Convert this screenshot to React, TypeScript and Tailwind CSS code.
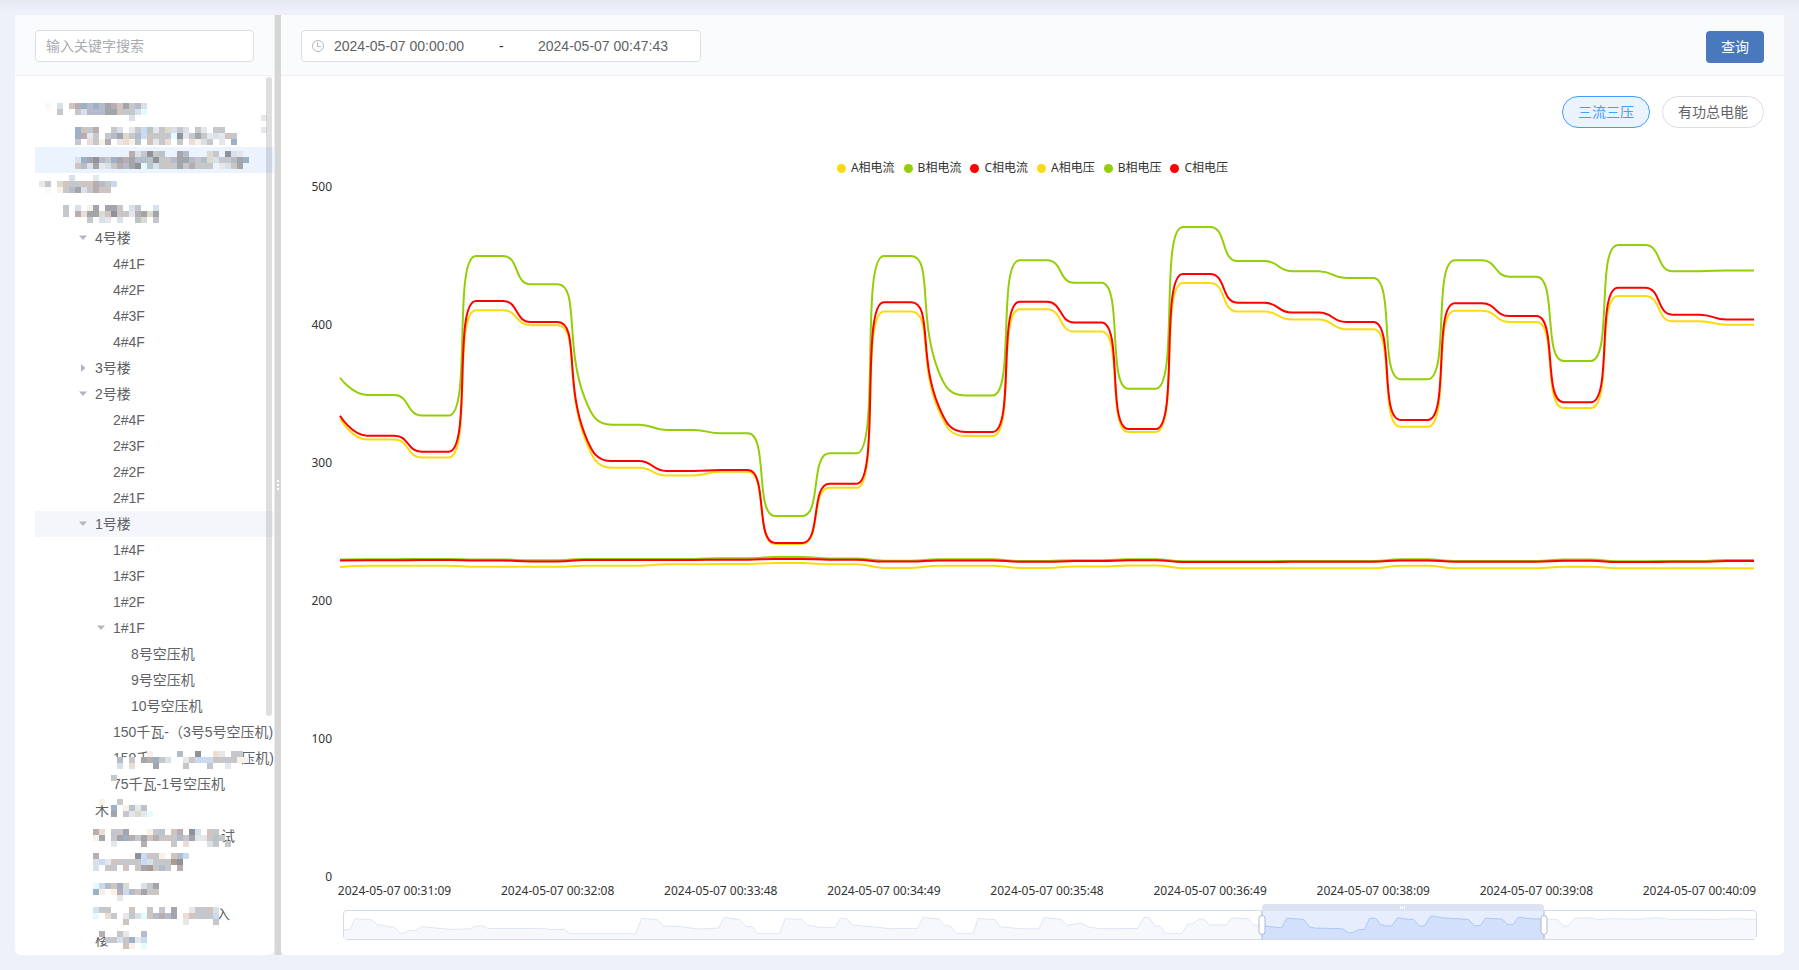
import { useState } from 'react';
import clsx from 'clsx';

type TreeRow = {
  level: number;
  label?: string;
  arrow?: 'down' | 'right';
  state?: 'current' | 'hover';
  // Redacted names: a cell pattern, its top inside the row, and what stays readable after it
  mask?: string[];
  maskTop?: number;
  tail?: string;
  tailClass?: string;
};

const maskColors: Record<string, string> = {
  a: '#e6e7ea',
  b: '#c6c7ca',
  c: '#a4a5ab',
  d: '#8f9298',
  e: '#d8e0ea',
  f: '#9db0c6',
  g: '#b5bbcb',
  h: '#cfc4bf',
  i: '#b8adb1',
  j: '#ecdcd4',
  k: '#dadbcc',
  l: '#c9dbf2',
  m: '#e2fbff',
  n: '#f8f1e8',
  o: '#b7c5c8',
  p: '#a89b90',
  q: '#f7f8f9',
  w: '#ffffff',
};

const rows: TreeRow[] = [
  {
    level: 0,
    maskTop: 8,
    mask: [
      '.q.e.hifgfgcihcbge',
      '...b..begggcchbbem',
      '...............e.....................a',
    ],
  },
  {
    level: 1,
    maskTop: 6,
    mask: [
      '......fhbi..be.abloabkebe.ba.bb......a',
      '......fiab.bgckbglhbbbmdabcbaeahb',
      '......b.jbni.ajno.habj.b.jneb.a.f',
    ],
  },
  {
    level: 1,
    state: 'current',
    maskTop: 4,
    mask: [
      '...............iebdbo..cg...kb.dea',
      '......efcdgbfcicggodbbgccgbgkebbgcf',
      '......hgecaebigcdmoebhbcbibbb.aehc',
    ],
  },
  {
    level: 0,
    maskTop: 2,
    mask: ['.....e...a', 'ab.khbbhhigbl', '.q.nbgcebihh'],
  },
  {
    level: 1,
    maskTop: 6,
    mask: [
      '....b.e.nc.ccb.eb..e',
      '....b.ijcckhdhbaickc',
      '........b.ea.e..ok.b',
    ],
  },
  { level: 2, label: '4号楼', arrow: 'down' },
  { level: 3, label: '4#1F' },
  { level: 3, label: '4#2F' },
  { level: 3, label: '4#3F' },
  { level: 3, label: '4#4F' },
  { level: 2, label: '3号楼', arrow: 'right' },
  { level: 2, label: '2号楼', arrow: 'down' },
  { level: 3, label: '2#4F' },
  { level: 3, label: '2#3F' },
  { level: 3, label: '2#2F' },
  { level: 3, label: '2#1F' },
  { level: 2, label: '1号楼', arrow: 'down', state: 'hover' },
  { level: 3, label: '1#4F' },
  { level: 3, label: '1#3F' },
  { level: 3, label: '1#2F' },
  { level: 3, label: '1#1F', arrow: 'down' },
  { level: 4, label: '8号空压机' },
  { level: 4, label: '9号空压机' },
  { level: 4, label: '10号空压机' },
  { level: 3, label: '150千瓦-（3号5号空压机)' },
  {
    level: 3,
    label: '150千',
    tail: '压机)',
    tailClass: 'ml-auto',
    maskTop: 6,
    mask: [
      '..................n....g..d..ja.bb',
      '............wgwbwcifbe..ahlllhbbbnn',
      '............wewjwwwc....b...b..a',
    ],
  },
  {
    level: 3,
    label: '75千瓦-1号空压机',
    maskTop: 4,
    mask: ['............b'],
  },
  {
    level: 2,
    label: '木',
    maskTop: 2,
    mask: ['..........n..b', '............f.noao', '............c.bakam'],
  },
  {
    level: 2,
    tail: '试',
    tailClass: 'ml-[126px]',
    maskTop: 6,
    mask: [
      '.........ij.bbc...nbo.hi.de.hb',
      '.........nc.bcfibchibhbgbcaahob',
      '............a....i....b.j...eb.b',
    ],
  },
  {
    level: 2,
    maskTop: 4,
    mask: [
      '.........i......dlhbn.hgl',
      '.........elahbbbblebbbpd',
      '.........e.bb.h.hcpbgb.i',
    ],
  },
  {
    level: 2,
    maskTop: 8,
    mask: ['.........mlghfk..ebc', '.........fn.nilghcbh', '.............a'],
  },
  {
    level: 2,
    tail: '入',
    tailClass: 'ml-[121px]',
    maskTop: 6,
    mask: [
      '.........ebb...h..b.b.c..abbhe',
      '.........m.jb.abemhgigc.jhbbbl',
      '..............h.........a....b',
    ],
  },
  {
    level: 2,
    label: '楼',
    maskTop: 4,
    mask: ['.........wiwwba..g', '...........bbebfal', '..............hn.m'],
  },
];

const indents = ['pl-0', 'pl-[18px]', 'pl-9', 'pl-[54px]', 'pl-[72px]'];

const Mask = ({ cells, top }: { cells: string[]; top: number }) => (
  <svg
    className="pointer-events-none absolute left-0 top-0 overflow-visible"
    width={239}
    height={26}
    shapeRendering="crispEdges"
    aria-hidden="true"
  >
    {cells.map((line, y) =>
      line
        .split('')
        .map((cell, x) =>
          cell === '.' ? null : (
            <rect
              key={`${x}-${y}`}
              x={4 + x * 6}
              y={top + y * 6}
              width={6}
              height={6}
              fill={maskColors[cell]}
            />
          )
        )
    )}
  </svg>
);

const TreeItem = ({ row }: { row: TreeRow }) => (
  <li
    className={clsx(
      'relative',
      row.state === 'current' && 'bg-[#ebf3ff]',
      row.state === 'hover' && 'bg-[#f5f6fb]'
    )}
  >
    <button
      type="button"
      aria-label={row.label ?? row.tail ?? '***'}
      className={clsx(
        'flex h-[26px] w-full items-center whitespace-nowrap text-left text-sm',
        indents[row.level]
      )}
    >
      <span className="flex w-6 shrink-0 justify-center">
        {row.arrow && (
          <svg width={8} height={8} viewBox="0 0 8 8" fill="#b4b6bd">
            <path d={row.arrow === 'down' ? 'M0 1.5h8L4 6z' : 'M2 0v8l4.5-4z'} />
          </svg>
        )}
      </span>
      {row.label && <span>{row.label}</span>}
      {row.tail && <span className={row.tailClass}>{row.tail}</span>}
    </button>
    {row.mask && <Mask cells={row.mask} top={row.maskTop ?? 0} />}
  </li>
);

const Sidebar = () => (
  <aside className="relative flex w-[259px] shrink-0 flex-col overflow-hidden rounded-b-md bg-white">
    <div className="h-[61px] shrink-0 border-b border-[#eef0f5] bg-[#fafbfd] pl-5 pr-5 pt-[15px]">
      <input
        type="text"
        aria-label="输入关键字搜索"
        placeholder="输入关键字搜索"
        className="h-8 w-full rounded border border-[#dcdfe6] bg-white px-2.5 text-sm outline-none placeholder:text-[#a8abb2]"
      />
    </div>
    <ul className="min-h-0 flex-1 overflow-hidden pl-5 pt-[19px]">
      {rows.map((row, i) => (
        <TreeItem key={i} row={row} />
      ))}
    </ul>
    <div className="absolute right-[2px] top-[62px] h-[68%] w-1.5 rounded-full bg-[#909399]/30" />
  </aside>
);

const YELLOW = '#fbdb0f';
const GREEN = '#93ce07';
const RED = '#ff0000';

const WIDTH = 1414;
const HEIGHT = 690;
const MAX = 500;

// Every reading lasts two samples unless it is listed with its own count
const expand = (values: (number | [number, number])[]) =>
  values.flatMap((v) =>
    Array.isArray(v) ? Array(v[1]).fill(v[0]) : [v, v]
  ) as number[];

const series = [
  {
    name: 'A相电流',
    color: YELLOW,
    data: expand([
      [332.3, 1], 317, 304, 410.6, 399.8, [318, 1], 296.6, 291, 293.7, 241.3,
      282, 409.8, [339, 1], 319.5, 411.4, 395.2, 322.5, 430.4, 409.7, 404,
      396.9, 326.3, 410.4, 402.2, 339.9, 421, 402.7, 400.2,
    ]),
  },
  {
    name: 'B相电流',
    color: GREEN,
    data: expand([
      [361.8, 1], 349.3, 334.4, 450, 429.5, [347, 1], 327.8, 324, 321.5, 261.6,
      307, 450, [367, 1], 349, 447, 430.6, 353.8, 471, 446.4, 439, 434, 360.7,
      446.9, 435, 374, 458, 439, 439.5,
    ]),
  },
  {
    name: 'C相电流',
    color: RED,
    data: expand([
      [334.3, 1], 319.8, 308.2, 417.4, 402.2, [321, 1], 301.4, 294.2, 294.9,
      242, 285, 416.4, [342, 1], 322.5, 416.8, 401.9, 324.6, 437, 416.2, 409,
      402.2, 331.2, 415.7, 406.5, 344, 427, 407.5, 403.9,
    ]),
  },
  {
    name: 'A相电压',
    color: YELLOW,
    data: expand([
      [224.6, 1], 225.6, 225.6, 224.8, 224.8, [225.6, 1], 225.6, 226.6, 226.8,
      227.5, 226.6, 224, [225.6, 1], 225.6, 224, 225, 225.8, 223.8, 223.8,
      223.8, 223.8, 225.6, 223.8, 223.8, 224.8, 223.8, 223.8, 223.8,
    ]),
  },
  {
    name: 'B相电压',
    color: GREEN,
    data: expand([
      [230, 1], 230.3, 230.5, 230.1, 229.5, [230.5, 1], 230.5, 230.5, 231,
      231.8, 230.8, 229.2, [230.2, 1], 230.2, 229, 229.6, 230.3, 228.8, 228.8,
      229, 229, 230.2, 229, 229, 230, 228.8, 229, 229.8,
    ]),
  },
  {
    name: 'C相电压',
    color: RED,
    data: expand([
      [229.3, 1], 229.5, 229.7, 229.3, 228.7, [229.8, 1], 229.8, 229.8, 229.9,
      230.5, 229.9, 228.6, [229.4, 1], 229.4, 228.4, 229, 229.5, 228.3, 228.3,
      228.4, 228.4, 229.4, 228.4, 228.4, 229.1, 228.3, 228.4, 229,
    ]),
  },
];

const clamp = (v: number, a: number, b: number) =>
  Math.min(Math.max(v, Math.min(a, b)), Math.max(a, b));

const smoothPath = (data: number[]) => {
  const pts = data.map((v, i) => ({
    x: (i * WIDTH) / (data.length - 1),
    y: HEIGHT - (v / MAX) * HEIGHT,
  }));
  let d = `M${pts[0].x} ${pts[0].y}`;
  let c0 = pts[0];

  for (let i = 1; i < pts.length; i++) {
    const prev = pts[i - 1];
    const cur = pts[i];
    const next = pts[i + 1];
    let c1 = cur;
    let nextC0 = cur;

    if (next) {
      const before = Math.hypot(cur.x - prev.x, cur.y - prev.y);
      const after = Math.hypot(next.x - cur.x, next.y - cur.y);
      const k = (0.5 * after) / (after + before);
      const nx = clamp(cur.x + (next.x - prev.x) * k, cur.x, next.x);
      const ny = clamp(cur.y + (next.y - prev.y) * k, cur.y, next.y);
      c1 = {
        x: clamp(cur.x - ((nx - cur.x) * before) / after, prev.x, cur.x),
        y: clamp(cur.y - ((ny - cur.y) * before) / after, prev.y, cur.y),
      };
      nextC0 = {
        x: cur.x + ((cur.x - c1.x) * after) / before,
        y: cur.y + ((cur.y - c1.y) * after) / before,
      };
    }

    d += `C${c0.x} ${c0.y} ${c1.x} ${c1.y} ${cur.x} ${cur.y}`;
    c0 = nextC0;
  }
  return d;
};

const yLabels = ['500', '400', '300', '200', '100', '0'];

const xLabels = [
  '2024-05-07 00:31:09',
  '2024-05-07 00:32:08',
  '2024-05-07 00:33:48',
  '2024-05-07 00:34:49',
  '2024-05-07 00:35:48',
  '2024-05-07 00:36:49',
  '2024-05-07 00:38:09',
  '2024-05-07 00:39:08',
  '2024-05-07 00:40:09',
];

// Outline of the whole period, drawn in the zoom bar
const overview =
  '0,20 6,20 11,8.3 27,9.3 34,15 39,15.3 44,17 50,17 56,23.7 60,23.7 66,20.7 72,20.7 78,16.7 99,19 110,19.7 127,19 132,16 139,16 144,18.7 199,18.7 206,19.7 221,19.7 226,24.3 292,24.3 298,8 314,9.3 320,16 340,17 353,19.3 375,18.3 381,7 396,9.3 403,16.7 409,16.7 414,24 436,24 442,8.3 458,9 464,15 474,17.3 492,18 497,8 503,8 509,15 537,17.7 546,19 557,18.7 574,18.7 580,7 596,8.7 602,16 607,16 613,24 630,24 635,8 652,9.3 657,17 679,19 696,19 701,7 718,9 724,15.3 734,13.7 740,13.7 745,17 757,19 795,18.7 801,7 806,7 812,16 817,16.3 823,24 839,24 845,14 850,14 856,8.7 861,8.7 867,15 884,14.7 889,7.3 905,8.3 911,15 920,15.3 928,17 939,18 944,7.7 961,9 967,17 972,18.3 1000,19 1006,23.3 1010,23.3 1016,20 1022,19.7 1027,7.7 1033,7.7 1038,14.7 1044,16 1049,16 1055,7.3 1066,9 1071,9 1077,16 1082,16 1088,5.7 1093,5.7 1099,7.3 1126,9 1132,15.7 1138,15.7 1143,7.7 1160,8.7 1165,14.3 1171,14.3 1176,6.7 1189,8.3 1215,9 1221,16 1226,16 1232,7.7 1249,7.3 1255,9.3 1265,8.3 1299,8.7 1314,7.3 1330,9 1350,8.7 1374,9 1394,8.3 1414,9';

const Overview = ({ fill, stroke }: { fill: string; stroke: string }) => (
  <>
    <polygon points={`0,30 ${overview} ${WIDTH},30`} fill={fill} />
    <polyline
      points={overview}
      fill="none"
      stroke={stroke}
      vectorEffect="non-scaling-stroke"
    />
  </>
);

const ZoomHandle = ({ at }: { at: number }) => (
  <div
    className="absolute top-0 flex h-full w-[7px] -translate-x-1/2 items-center justify-center"
    style={{ left: `${at}%` }}
  >
    <span className="absolute h-full w-px bg-[#acb8d1]" />
    <span className="relative h-5 w-full rounded-sm border border-[#acb8d1] bg-white" />
  </div>
);

const ZoomBar = () => {
  const [start, setStart] = useState(65);
  const [end, setEnd] = useState(85);

  return (
    <div className="relative ml-[62px] mr-[27px] mt-[11px] h-[30px] rounded border border-[#d2dbee]">
      <svg
        className="h-full w-full"
        viewBox={`0 0 ${WIDTH} 30`}
        preserveAspectRatio="none"
        aria-hidden="true"
      >
        <defs>
          <clipPath id="selected">
            <rect
              x={(start / 100) * WIDTH}
              width={((end - start) / 100) * WIDTH}
              height={30}
            />
          </clipPath>
        </defs>
        <Overview fill="#f6f8fc" stroke="#dfe6f5" />
        <g clipPath="url(#selected)">
          <rect width={WIDTH} height={30} fill="#e6edfd" />
          <Overview fill="#d3e0fc" stroke="#adc7f8" />
        </g>
      </svg>
      <div
        className="absolute -top-[7px] flex h-[7px] items-center justify-center gap-px rounded-t-sm bg-[#dde3f0]"
        style={{ left: `${start}%`, width: `${end - start}%` }}
      >
        <span className="h-[3px] w-px bg-white" />
        <span className="h-[3px] w-px bg-white" />
        <span className="h-[3px] w-px bg-white" />
      </div>
      <ZoomHandle at={start} />
      <ZoomHandle at={end} />
      <input
        type="range"
        aria-label="开始"
        value={start}
        onChange={(e) => setStart(Math.min(+e.target.value, end))}
        className="sr-only"
      />
      <input
        type="range"
        aria-label="结束"
        value={end}
        onChange={(e) => setEnd(Math.max(+e.target.value, start))}
        className="sr-only"
      />
    </div>
  );
};

const Chart = () => (
  <div className="flex min-h-0 flex-1 flex-col font-['Noto_Sans','Noto_Sans_CJK_SC',sans-serif] text-xs leading-4 text-[#333]">
    <ul className="mb-[11px] mt-8 flex justify-center gap-[9px]">
      {series.map((s) => (
        <li key={s.name} className="flex items-center gap-[5px]">
          <span
            className="size-[9px] rounded-full"
            style={{ backgroundColor: s.color }}
          />
          {s.name}
        </li>
      ))}
    </ul>
    <div className="flex min-h-0 flex-1 pr-[30px]">
      <div className="-my-2 flex w-[59px] shrink-0 flex-col justify-between pr-2 text-right">
        {yLabels.map((label) => (
          <span key={label}>{label}</span>
        ))}
      </div>
      <svg
        className="h-full min-w-0 flex-1 overflow-visible"
        viewBox={`0 0 ${WIDTH} ${HEIGHT}`}
        preserveAspectRatio="none"
        role="img"
        aria-label="三流三压"
      >
        {series.map((s) => (
          <path
            key={s.name}
            d={smoothPath(s.data)}
            fill="none"
            stroke={s.color}
            strokeWidth={2}
            strokeLinejoin="bevel"
            vectorEffect="non-scaling-stroke"
          />
        ))}
      </svg>
    </div>
    <div className="mt-1.5 grid grid-cols-9 pl-8 pr-[3px] text-center">
      {xLabels.map((label) => (
        <span key={label} className="whitespace-nowrap">
          {label}
        </span>
      ))}
    </div>
    <ZoomBar />
  </div>
);

const Toolbar = () => (
  <div className="flex h-[61px] shrink-0 items-start justify-between border-b border-[#eef0f5] bg-[#fafbfd] px-5 pt-[15px]">
    <div className="flex h-8 w-[400px] items-center rounded border border-[#dcdfe6] bg-white pl-2.5 text-sm">
      <svg
        width={12}
        height={12}
        viewBox="0 0 12 12"
        fill="none"
        stroke="#b4b7be"
        className="mr-2.5"
        aria-hidden="true"
      >
        <circle cx={6} cy={6} r={5.5} />
        <path d="M5.5 2.5v4H9" />
      </svg>
      <input
        type="text"
        aria-label="开始时间"
        defaultValue="2024-05-07 00:00:00"
        className="w-[156px] bg-transparent outline-none"
      />
      <span className="w-12 pl-[9px] text-[#303133]">-</span>
      <input
        type="text"
        aria-label="结束时间"
        defaultValue="2024-05-07 00:47:43"
        className="w-[150px] bg-transparent outline-none"
      />
    </div>
    <button
      type="button"
      className="mt-px h-8 rounded bg-[#4a78bd] px-[15px] text-sm text-white"
    >
      查询
    </button>
  </div>
);

export default function App() {
  return (
    <div className="flex h-screen bg-[#eef1fa] bg-linear-to-b from-[#e6e9f2] to-[#eef1fa] to-[12px] p-[15px] font-['Liberation_Sans','Noto_Sans_CJK_SC',sans-serif] text-[#606266]">
      <Sidebar />
      <div className="flex w-[7px] shrink-0 flex-col items-center justify-center gap-[2px] border-l border-[#ececec] bg-[#d6d6d6]">
        <span className="size-[2px] bg-white" />
        <span className="size-[2px] bg-white" />
        <span className="size-[2px] bg-white" />
      </div>
      <main className="flex min-w-0 flex-1 flex-col overflow-hidden rounded-b-md bg-white pb-[15px]">
        <Toolbar />
        <div className="flex justify-end gap-3 px-5 pt-5">
          <button
            type="button"
            className="h-8 rounded-full border border-[#409eff] bg-[#ebf3ff] px-[15px] text-sm text-[#409eff]"
          >
            三流三压
          </button>
          <button
            type="button"
            className="h-8 rounded-full border border-[#dcdfe6] bg-white px-[15px] text-sm"
          >
            有功总电能
          </button>
        </div>
        <Chart />
      </main>
    </div>
  );
}
